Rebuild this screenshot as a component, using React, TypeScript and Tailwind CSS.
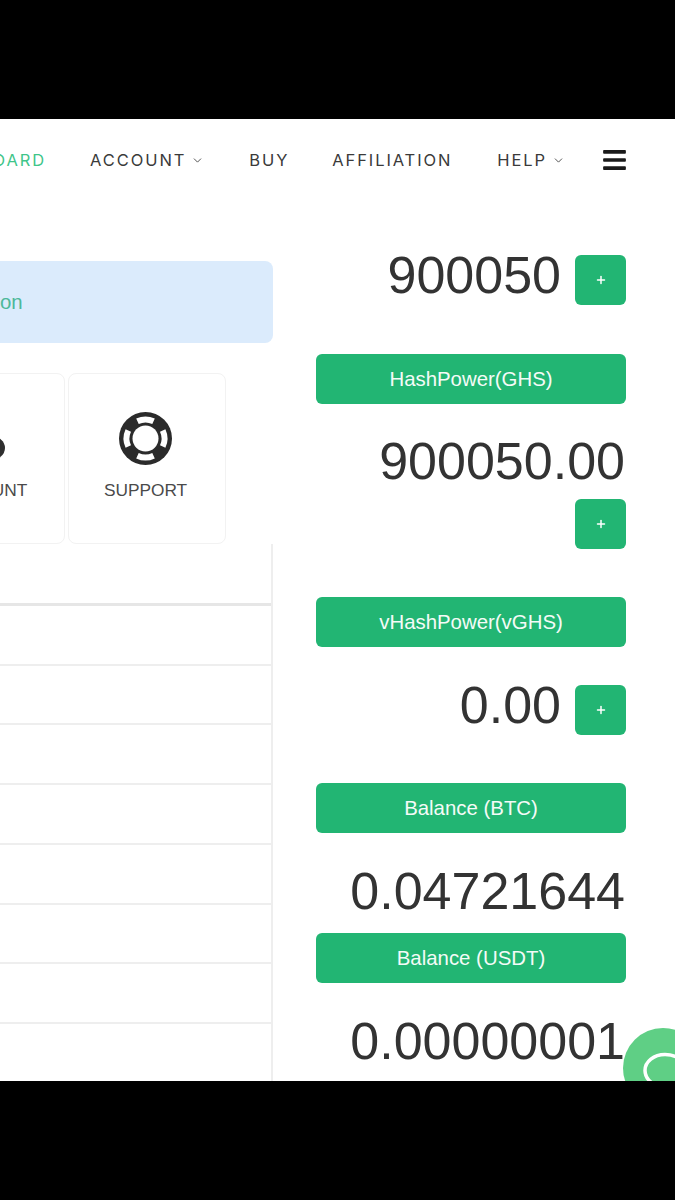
import React from "react";
import { FaBars } from "react-icons/fa";
import { ChevronDown, Plus } from "lucide-react";

const sans = "font-['Liberation_Sans',Arial,sans-serif]";

function NavItem({ label, chevron, active, className }: { label: string; chevron?: boolean; active?: boolean; className?: string }) {
  return (
    <a className={`flex items-center shrink-0 whitespace-nowrap text-[16.5px] tracking-[1.9px] font-['Inter',sans-serif] ${active ? "text-[#3fc58a]" : "text-[#3a3a3a]"} ${className ?? ""}`}>
      {label}
      {chevron && <ChevronDown className="ml-[5px] w-[13px] h-[13px]" strokeWidth={1.6} />}
    </a>
  );
}

function PlusBtn({ className }: { className?: string }) {
  return (
    <button className={`flex items-center justify-center w-[51px] h-[50px] shrink-0 bg-[#22b573] rounded-[6px] text-white ${className ?? ""}`}>
      <Plus className="w-[12px] h-[12px]" strokeWidth={3} />
    </button>
  );
}

function Bar({ label, className }: { label: string; className?: string }) {
  return (
    <div className={`flex items-center justify-center h-[50px] bg-[#22b573] rounded-[6px] text-[#f4fbf7] text-[20.4px] ${className ?? ""}`}>
      {label}
    </div>
  );
}

function Num({ value, className }: { value: string; className?: string }) {
  return <span className={`text-[52px] leading-[60px] text-[#333] ${className ?? ""}`}>{value}</span>;
}

function Card({ icon, label, className }: { icon: React.ReactNode; label: string; className?: string }) {
  return (
    <div className={`flex flex-col items-center shrink-0 w-[158px] h-[171px] bg-white border border-[#f2f2f2] rounded-[8px] pt-[38px] pr-[3px] ${className ?? ""}`}>
      {icon}
      <span className={`mt-[15px] text-[17.3px] leading-[20px] text-[#4a4a4a] ${sans}`}>{label}</span>
    </div>
  );
}

function LifeRing() {
  return (
    <svg width="53" height="53" viewBox="-26.500 -26.500 53 53" className="shrink-0">
      <circle r="26.500" fill="#2b2b2b" />
      <circle r="13" fill="#ffffff" />
      {[0, 90, 180, 270].map((a) => (
        <path key={a} transform={`rotate(${a})`} d="M-9.300 -19.900A22 22 0 0 1 9.300 -19.900L6.800 -14.500A16 16 0 0 0 -6.800 -14.500Z" fill="#ffffff" />
      ))}
    </svg>
  );
}

const rows = [60, 59, 60, 60, 60, 59, 60];

export default function App() {
  return (
    <div className="flex flex-col w-[675px] h-[1200px] bg-black overflow-hidden">
      <div className="h-[119px] shrink-0" />
      <div className={`relative flex flex-col h-[962px] shrink-0 bg-white overflow-hidden ${sans}`}>
        <header className="flex items-center justify-end h-[82px] shrink-0 pr-[49px]">
          <NavItem label="DASHBOARD" active className="mr-[44px]" />
          <NavItem label="ACCOUNT" chevron className="mr-[45px]" />
          <NavItem label="BUY" className="mr-[43px]" />
          <NavItem label="AFFILIATION" className="mr-[45px]" />
          <NavItem label="HELP" chevron className="mr-[38px]" />
          <FaBars className="w-[23px] h-[26px] shrink-0 text-[#1a1a1a]" />
        </header>

        <div className="flex flex-1 min-h-0">
          <div className="relative flex flex-col w-[273px] shrink-0 pt-[60px]">
            <div className="flex items-center justify-start h-[82px] bg-[#dbebfc] rounded-r-[8px] text-[20.4px] text-[#4db89a] pt-[1px]">
              on
            </div>
            <div className="flex justify-end gap-[3px] mt-[30px] pr-[47px] h-[171px]">
              <Card
                icon={
                  <svg width="52" height="53" viewBox="0 0 52 53" className="shrink-0">
                    <ellipse cx="32" cy="36" rx="14" ry="12" fill="#2f2f2f" />
                  </svg>
                }
                label="ACCOUNT"
              />
              <Card icon={<LifeRing />} label="SUPPORT" />
            </div>
            <div className="flex flex-col flex-1 border-r-2 border-[#eeeeee]">
              <div className="h-[62px] shrink-0 border-b-[3px] border-[#e6e6e6]" />
              {rows.map((h, i) => (
                <div key={i} style={{ height: h }} className="shrink-0 border-b-2 border-[#eeeeee]" />
              ))}
            </div>
          </div>

          <div className="flex flex-col w-[310px] ml-[43px] shrink-0 pt-[54px]">
            <div className="flex items-center justify-end h-[50px]">
              <Num value="900050" className="-mt-[10px]" />
              <PlusBtn className="ml-[14px]" />
            </div>
            <Bar label="HashPower(GHS)" className="mt-[49px]" />
            <div className="flex flex-col items-end mt-[27px]">
              <Num value="900050.00" className="mr-[1px]" />
              <PlusBtn className="mt-[8px]" />
            </div>
            <Bar label="vHashPower(vGHS)" className="mt-[48px]" />
            <div className="flex items-center justify-end h-[50px] mt-[38px]">
              <Num value="0.00" className="-mt-[10px]" />
              <PlusBtn className="ml-[14px]" />
            </div>
            <Bar label="Balance (BTC)" className="mt-[48px]" />
            <div className="flex justify-end h-[60px] mt-[28px] mb-[12px]">
              <Num value="0.04721644" className="mr-[1px]" />
            </div>
            <Bar label="Balance (USDT)" />
            <div className="flex justify-end h-[60px] mt-[28px]">
              <Num value="0.00000001" className="mr-[1px]" />
            </div>
          </div>
        </div>

        <div className="absolute left-[623px] top-[909px] flex items-center justify-center w-[80px] h-[80px] rounded-full bg-[#5fcf85]">
          <svg width="80" height="80" viewBox="0 0 80 80" fill="none">
            <path d="M42 26.500c-11 0-20 7-20 16 0 5 3 9.500 7 12.500 0 4-2 7-4 9 4 0 8-2 11-5 2 .3 4 .5 6 .5 11 0 20-7 20-17s-9-16-20-16Z" stroke="white" strokeWidth="3.500" />
          </svg>
        </div>
      </div>
      <div className="flex-1" />
    </div>
  );
}
